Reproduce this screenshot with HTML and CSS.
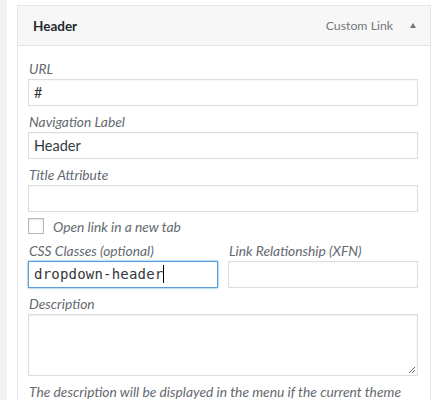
FILE: index.html
```html
<!DOCTYPE html>
<html lang="en">
<head>
<meta charset="utf-8">
<title>Menu item settings</title>
<link rel="stylesheet" href="styles.css">
</head>
<body>
<div class="page">
  <div class="strip"></div>
  <div class="wrap">
    <div class="card">
      <div class="handle">
        <span class="item-title">Header</span>
        <span class="item-controls">
          <span class="item-type">Custom Link</span>
          <span class="arrow"></span>
        </span>
      </div>
      <div class="settings">
        <div class="field">
          <div class="label">URL</div>
          <div class="input">#</div>
        </div>
        <div class="field">
          <div class="label">Navigation Label</div>
          <div class="input">Header</div>
        </div>
        <div class="field">
          <div class="label">Title Attribute</div>
          <div class="input"></div>
        </div>
        <div class="check-row">
          <span class="checkbox"></span>
          <span class="check-label">Open link in a new tab</span>
        </div>
        <div class="two-col">
          <div class="field">
            <div class="label">CSS Classes (optional)</div>
            <div class="input input-focus mono">dropdown-header<span class="caret"></span></div>
          </div>
          <div class="field">
            <div class="label">Link Relationship (XFN)</div>
            <div class="input"></div>
          </div>
        </div>
        <div class="field">
          <div class="label">Description</div>
          <div class="textarea">
            <svg class="grip" width="8" height="8" viewBox="0 0 8 8"><path d="M1 7L7 1M4 7L7 4" stroke="#666" stroke-width="1" fill="none"/></svg>
          </div>
        </div>
        <div class="help">The description will be displayed in the menu if the current theme supports it.</div>
      </div>
    </div>
  </div>
</div>
</body>
</html>
```

FILE: styles.css
```css
* { box-sizing: border-box; }
html, body { margin: 0; padding: 0; background: #fff; }
body {
  font-family: Lato, "Open Sans", "DejaVu Sans", sans-serif;
  font-size: 13px;
  color: #32373c;
  height: 400px;
  overflow: hidden;
}
.page { display: flex; height: 400px; }
.strip { width: 7px; background: #f1f1f1; flex: none; }
.wrap { padding: 5px 9px 0 10px; flex: none; }
.card {
  width: 414px;
  border: 1px solid #e5e5e5;
  border-bottom: none;
  height: 395px;
}
.handle {
  height: 40px;
  background: #f7f7f7;
  border-bottom: 1px solid #e5e5e5;
  display: flex;
  align-items: center;
  justify-content: space-between;
  padding: 0 14px 0 15px;
}
.item-title { font-weight: bold; font-size: 13.5px; color: #23282d; }
.item-controls { display: flex; align-items: center; }
.item-type { color: #72777c; font-size: 12.3px; }
.arrow {
  width: 0; height: 0;
  margin-left: 17px;
  border-left: 3.5px solid transparent;
  border-right: 3.5px solid transparent;
  border-bottom: 5px solid #72777c;
}
.settings { padding: 13px 12px 0 10px; }
.field { margin-bottom: 6px; }
.label {
  font-style: italic;
  color: #646970;
  height: 20px;
  line-height: 20px;
  font-size: 13.8px;
  padding-left: 1px;
  white-space: nowrap;
}
.input {
  height: 27px;
  border: 1px solid #ddd;
  box-shadow: inset 0 1px 2px rgba(0,0,0,0.04);
  padding: 0 5px;
  line-height: 25px;
  font-size: 14.5px;
  color: #32373c;
  background: #fff;
}
.input-focus {
  border-color: #5b9dd9;
  box-shadow: 0 0 2px rgba(30,140,190,0.8);
}
.mono { font-family: "DejaVu Sans Mono", monospace; font-size: 14px; letter-spacing: 0.2px; }
.caret {
  display: inline-block;
  width: 1px;
  height: 18px;
  background: #000;
  vertical-align: -4px;
}
.check-row { display: flex; align-items: center; height: 16px; margin: 4px 0 7px; }
.checkbox {
  width: 16px; height: 16px;
  border: 1px solid #b4b9be;
  background: #fff;
  box-shadow: inset 0 1px 2px rgba(0,0,0,0.1);
  flex: none;
}
.check-label { font-style: italic; color: #646970; margin-left: 9px; font-size: 13.8px; }
.two-col { display: grid; grid-template-columns: 190px 190px; column-gap: 10px; }
.textarea {
  height: 62px;
  border: 1px solid #ddd;
  box-shadow: inset 0 1px 2px rgba(0,0,0,0.07);
  display: flex;
  justify-content: flex-end;
  align-items: flex-end;
  padding: 0 1px 1px 0;
}
.grip { display: block; }
.help { font-style: italic; color: #646970; line-height: 20px; padding-left: 1px; font-size: 13.8px; }
```
